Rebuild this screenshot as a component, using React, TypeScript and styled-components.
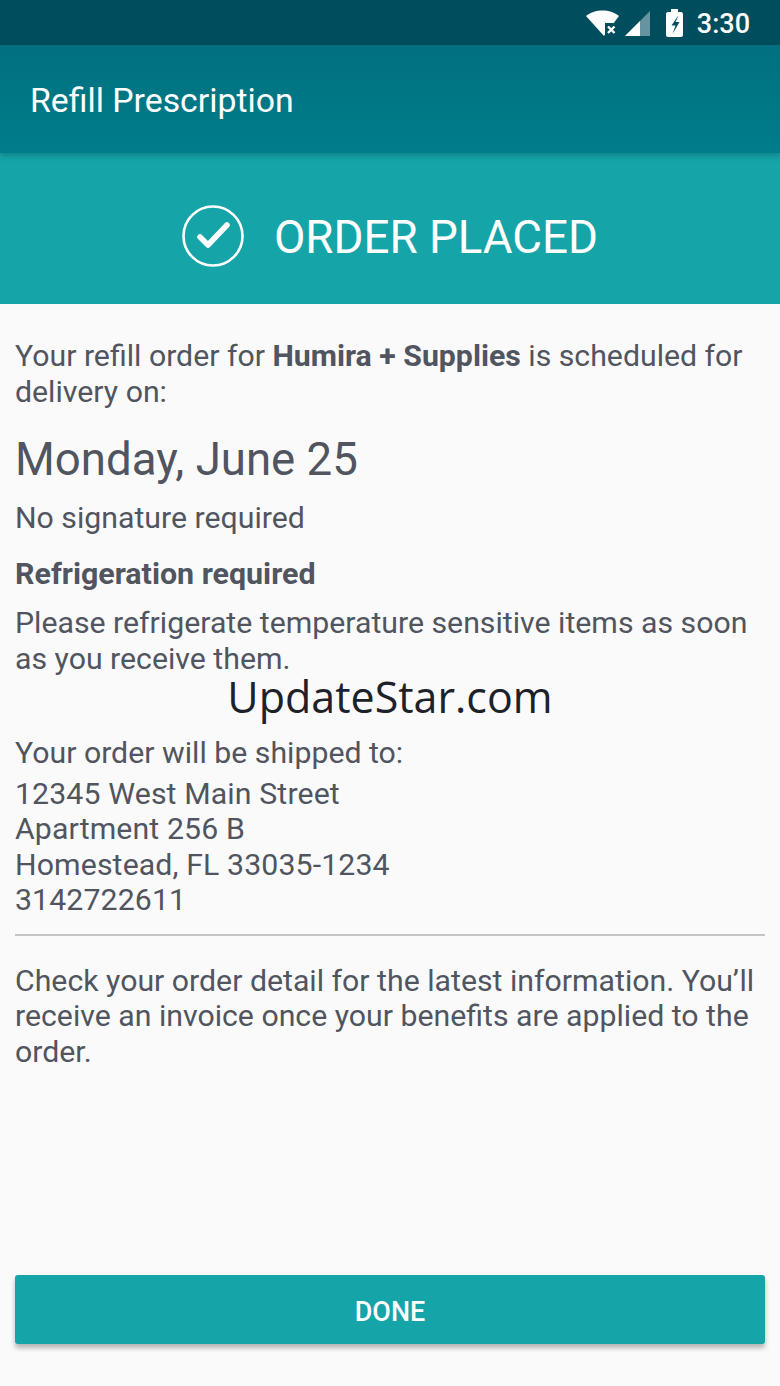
import React from 'react';
import styled, { createGlobalStyle } from 'styled-components';

const GlobalStyle = createGlobalStyle`
  html, body {
    margin: 0;
    padding: 0;
    background: #fafafa;
  }
  * {
    box-sizing: border-box;
  }
`;

const Screen = styled.div`
  position: relative;
  width: 780px;
  height: 1386px;
  display: flex;
  flex-direction: column;
  overflow: hidden;
  background: #fafafa;
  font-family: Roboto, "Liberation Sans", sans-serif;
  color: #50555f;
`;

const StatusBar = styled.div`
  height: 45px;
  flex: none;
  display: flex;
  align-items: center;
  justify-content: flex-end;
  padding-right: 30px;
  background: #004d5e;
  color: #fff;
`;

const StatusIcons = styled.div`
  display: flex;
  align-items: center;
  gap: 6px;
  margin-right: 14px;
  padding-top: 1px;
`;

const Clock = styled.span`
  font-size: 27px;
  font-weight: 500;
  line-height: 45px;
  padding-top: 3px;
`;

const AppBar = styled.div`
  height: 108px;
  flex: none;
  display: flex;
  align-items: center;
  padding: 2px 0 0 30px;
  background: linear-gradient(#00707f 0%, #007d8b 100%);
  color: #fff;
  font-size: 33.8px;
  position: relative;
  z-index: 1;
  box-shadow: 0 3px 5px rgba(0, 60, 70, 0.3);
`;

const Banner = styled.div`
  height: 151px;
  flex: none;
  display: flex;
  align-items: center;
  justify-content: center;
  gap: 30px;
  padding-top: 15px;
  background: #15a4a8;
  color: #fff;
  font-size: 45.7px;
`;

const BannerLabel = styled.span`
  padding-top: 2px;
`;

const Body = styled.div`
  flex: 1;
  display: flex;
  flex-direction: column;
  padding: 34px 15px 0 15px;
`;

const Paragraph = styled.p<{ $gap?: number; $tracking?: number }>`
  margin: 0 0 ${p => p.$gap ?? 0}px;
  font-size: 30.25px;
  line-height: 35.5px;
  letter-spacing: ${p => p.$tracking ?? 0}px;
`;

const DeliveryDate = styled.h2`
  margin: 0 0 14px;
  font-size: 45.6px;
  font-weight: 400;
  line-height: 52px;
`;

const Heading = styled.h3`
  margin: 0 0 14px;
  font-size: 30.4px;
  font-weight: 700;
  line-height: 35.5px;
`;

const Divider = styled.hr`
  width: 100%;
  height: 2px;
  margin: 16px 0 27px;
  border: 0;
  background: #c2c4c6;
`;

const DoneButton = styled.button`
  position: absolute;
  left: 15px;
  bottom: 42px;
  width: 750px;
  height: 69px;
  padding-top: 5px;
  border: 0;
  border-radius: 3px;
  background: #15a4a8;
  color: #fff;
  font-family: Roboto, "Liberation Sans", sans-serif;
  font-size: 26.9px;
  font-weight: 500;
  box-shadow: 0 4px 5px rgba(0, 0, 0, 0.28);
`;

const Watermark = styled.div`
  position: absolute;
  left: 0;
  right: 0;
  top: 671px;
  text-align: center;
  font-family: "Open Sans", sans-serif;
  font-size: 43px;
  line-height: 52px;
  color: #1d2129;
`;

const WifiIcon = () => (
  <svg width="33" height="26" viewBox="0 0 33 26">
    <path d="M0 6 C8 -1.5 25 -1.5 33 6 L18 26 Z" fill="#fff" />
    <path d="M19 13h14v13H19z" fill="#004d5e" />
    <path d="M22 16.5l6.5 6.500M28.500 16.500l-6.500 6.500" stroke="#fff" strokeWidth="2.400" />
  </svg>
);

const SignalIcon = () => (
  <svg width="25" height="25" viewBox="0 0 25 25">
    <path d="M0 25 L25 0 V25 Z" fill="#fff" fillOpacity="0.4" />
    <path d="M0 25 L15 10 V25 Z" fill="#fff" />
  </svg>
);

const BatteryIcon = () => (
  <svg width="17" height="28" viewBox="0 0 17 28" style={{ marginLeft: 10 }}>
    <path d="M5 0h7v3h3a2 2 0 0 1 2 2v21a2 2 0 0 1-2 2H2a2 2 0 0 1-2-2V5a2 2 0 0 1 2-2h3z" fill="#fff" />
    <path d="M11.500 7.500 L5.500 16.500h4l-3 8.500 7-12h-4l2.500-5.500z" fill="#004d5e" />
  </svg>
);

const CheckCircleIcon = () => (
  <svg width="62" height="62" viewBox="0 0 62 62">
    <circle cx="31" cy="31" r="29.5" fill="none" stroke="#fff" strokeWidth="2.6" />
    <path d="M18 32 L26 40 L45 20" fill="none" stroke="#fff" strokeWidth="5.5" strokeLinecap="round" strokeLinejoin="round" />
  </svg>
);

export default function App() {
  return (
    <Screen>
      <GlobalStyle />
      <StatusBar>
        <StatusIcons>
          <WifiIcon />
          <SignalIcon />
          <BatteryIcon />
        </StatusIcons>
        <Clock>3:30</Clock>
      </StatusBar>
      <AppBar>Refill Prescription</AppBar>
      <Banner>
        <CheckCircleIcon />
        <BannerLabel>ORDER PLACED</BannerLabel>
      </Banner>
      <Body>
        <Paragraph $gap={25}>
          Your refill order for <strong>Humira + Supplies</strong> is scheduled for delivery on:
        </Paragraph>
        <DeliveryDate>Monday, June 25</DeliveryDate>
        <Paragraph $gap={20}>No signature required</Paragraph>
        <Heading>Refrigeration required</Heading>
        <Paragraph $gap={59}>
          Please refrigerate temperature sensitive items as soon as you receive them.
        </Paragraph>
        <Paragraph $gap={5}>Your order will be shipped to:</Paragraph>
        <Paragraph $tracking={0.12}>
          12345 West Main Street
          <br />
          Apartment 256 B
          <br />
          Homestead, FL 33035-1234
          <br />
          3142722611
        </Paragraph>
        <Divider />
        <Paragraph>
          Check your order detail for the latest information. You’ll receive an invoice once your benefits are applied to the order.
        </Paragraph>
      </Body>
      <DoneButton>DONE</DoneButton>
      <Watermark>UpdateStar.com</Watermark>
    </Screen>
  );
}
